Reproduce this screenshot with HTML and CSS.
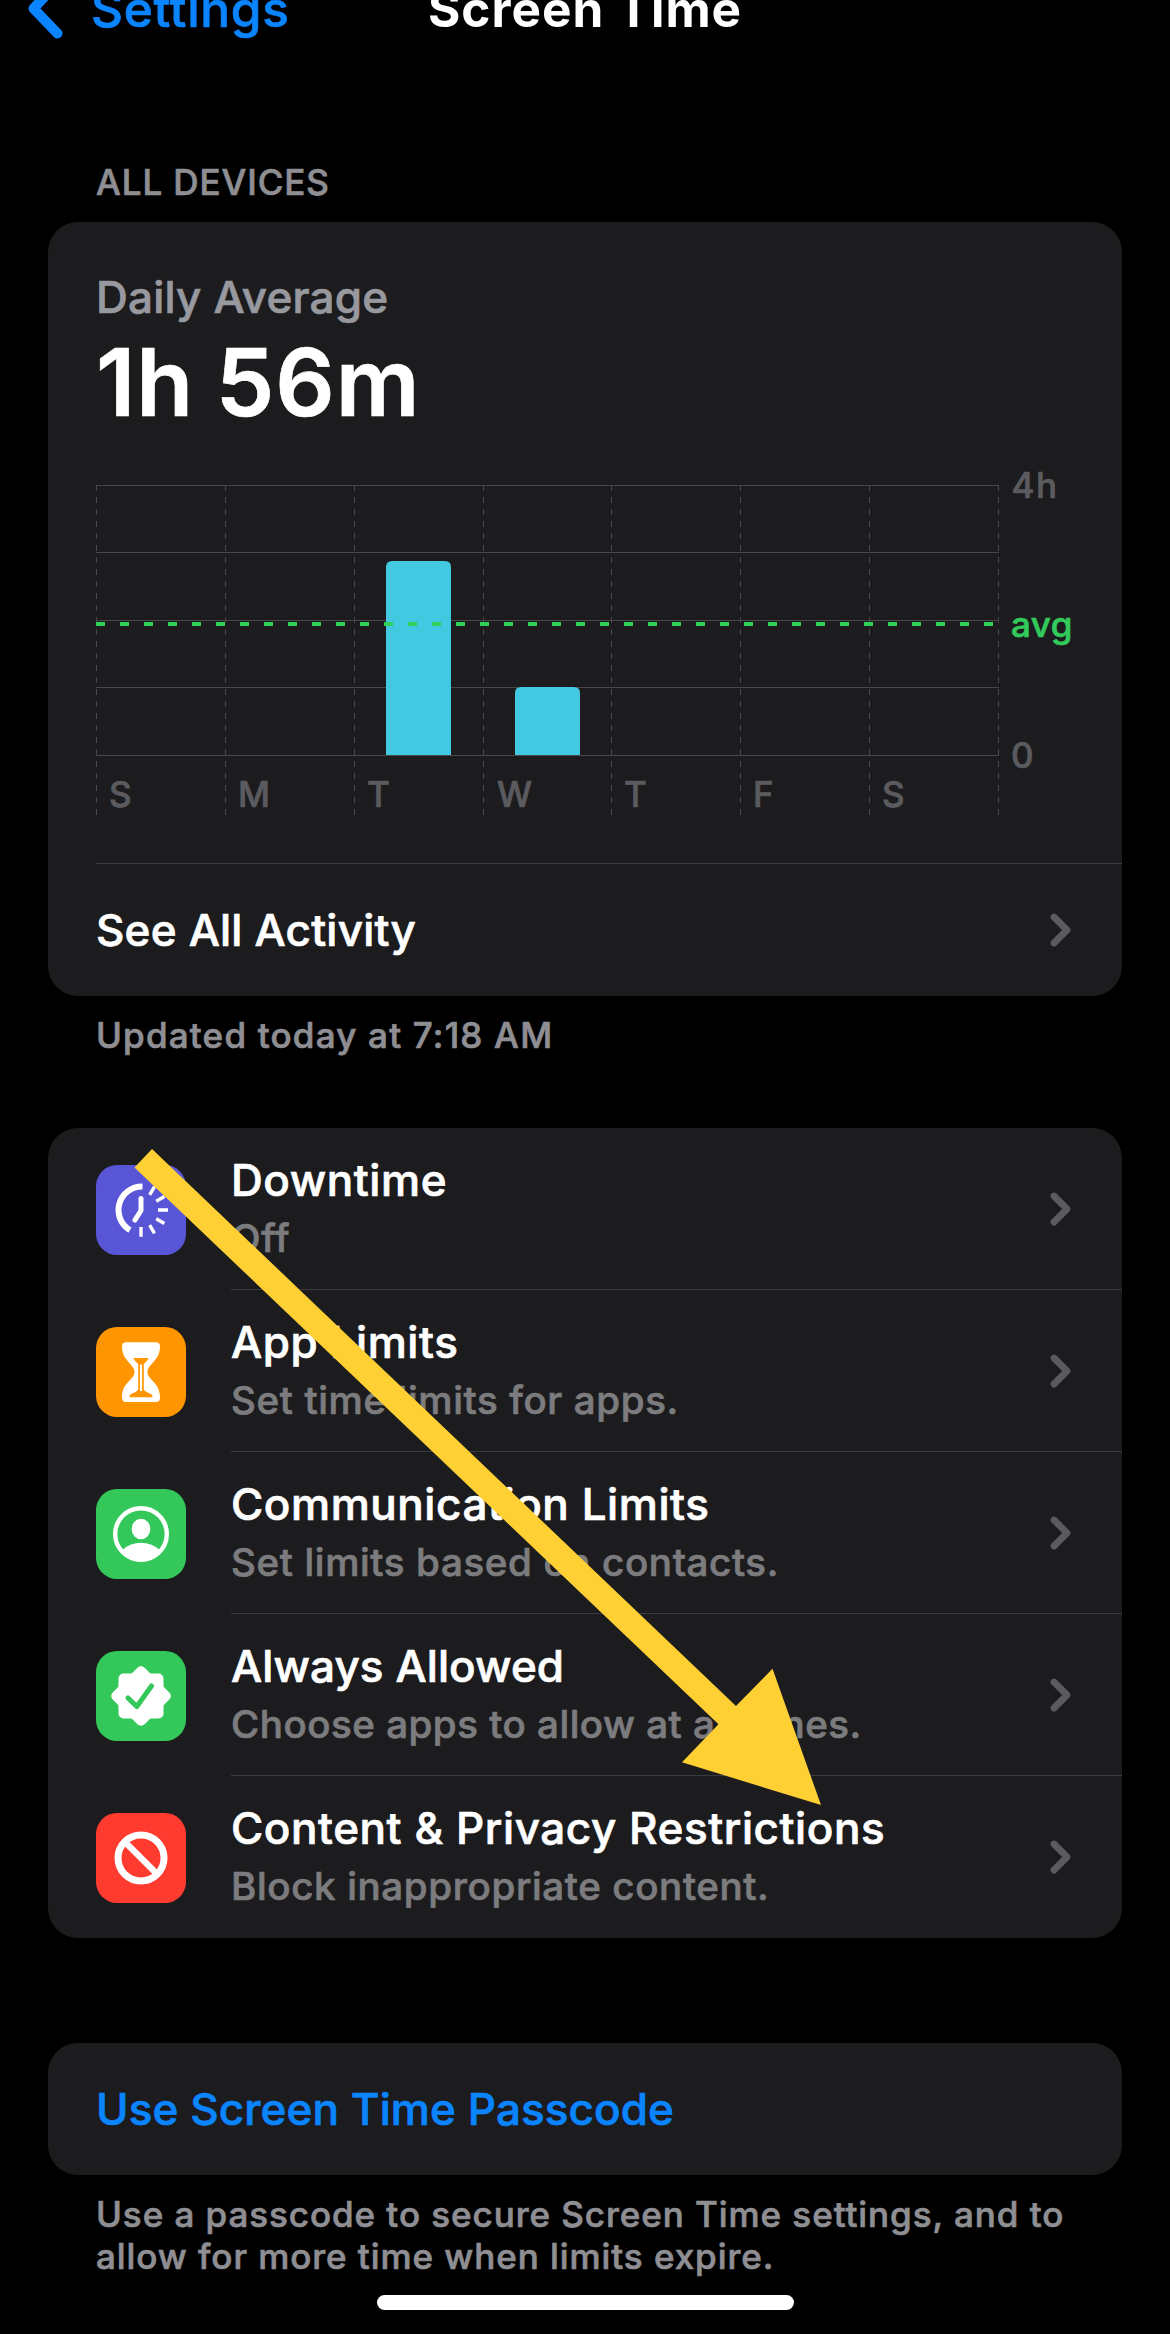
FILE: index.html
```html
<!DOCTYPE html>
<html lang="en">

<head>
    <meta charset="UTF-8">
    <meta name="viewport" content="width=device-width, initial-scale=1.0">
    <title>Screen Time</title>
    <link rel="stylesheet" href="styles.css">
</head>

<body>
    <header class="navbar">
        <a class="back" href="#">
            <svg class="back-icon" viewBox="0 0 40 60">
                <path d="M33.5 4 L9.5 29.5 L33.5 54.5" />
            </svg>
            Settings
        </a>
        <h1>Screen Time</h1>
    </header>

    <main>
        <h2 class="section-title">ALL DEVICES</h2>
        <section class="card usage">
            <div class="usage-label">Daily Average</div>
            <div class="usage-total">1h 56m</div>

            <svg class="chart" viewBox="0 0 1026 378">
                <!-- hour lines -->
                <g class="grid">
                    <path d="M0 .5H903M0 67.5H903M0 135.5H903M0 202.5H903M0 270.5H903" />
                    <path class="dashed" d="M.5 0V330M129.5 0V330M258.5 0V330M387.5 0V330M515.5 0V330M644.5 0V330M773.5 0V330M902.5 0V330" />
                </g>
                <!-- bars -->
                <g class="bars">
                    <path d="M290 270V82q0-6 6-6h53q6 0 6 6V270z" />
                    <path d="M419 270V208q0-6 6-6h53q6 0 6 6V270z" />
                </g>
                <path class="avg-line" d="M0 139H902" />
                <g class="labels">
                    <text x="13" y="322">S</text>
                    <text x="142" y="322">M</text>
                    <text x="271" y="322">T</text>
                    <text x="401" y="322">W</text>
                    <text x="528" y="322">T</text>
                    <text x="657" y="322">F</text>
                    <text x="786" y="322">S</text>
                    <text class="hours" x="915.5" y="12.5">4h</text>
                    <text class="avg" x="915" y="152">avg</text>
                    <text x="915" y="283">0</text>
                </g>
            </svg>

            <a class="row plain" href="#">
                <span class="title activity">See All Activity</span>
                <svg class="chevron" viewBox="0 0 22 34"><path d="M4 4L17 17L4 30" /></svg>
            </a>
        </section>
        <p class="note updated">Updated today at 7:18 AM</p>

        <section class="card options">
            <a class="row" href="#">
                <svg class="icon purple" viewBox="0 0 90 90">
                    <path class="line" stroke-width="6" d="M46.5 21.5A23.5 23.5 0 0 0 34 65.2" />
                    <path class="line round" stroke-width="5" d="M45 33.5V45.5L39 55" />
                    <path class="line" stroke-width="3.4" d="M62 45H72M60.2 53.7L68.4 58.5M53.7 60.2L58.5 68.4M45 62V71.8M60.2 36.3L68.4 31.5M53.7 29.8L58.5 21.6" />
                </svg>
                <div class="text">
                    <div>
                        <div class="title">Downtime</div>
                        <div class="subtitle">Off</div>
                    </div>
                    <svg class="chevron" viewBox="0 0 22 34"><path d="M4 4L17 17L4 30" /></svg>
                </div>
            </a>
            <a class="row" href="#">
                <svg class="icon orange" viewBox="0 0 90 90">
                    <path d="M30 15.3H60Q64 15.3 64 19.5C64 34 51.5 37 51.5 45C51.5 53 64 55 64 70.5Q64 75 60 75H30Q26 75 26 70.5C26 55 38.5 53 38.5 45C38.5 37 26 34 26 19.5Q26 15.3 30 15.3z" />
                    <path class="cutout" d="M37.3 31H52.7Q51 34.7 47.8 37V62.5Q49.5 65 55 67Q58 70 55.5 70.3H34.5Q32 70 35 67Q40.5 65 42.2 62.5V37Q39 34.7 37.3 31z" />
                    <path class="line" stroke-width="2.2" d="M45 37.5V64" />
                </svg>
                <div class="text">
                    <div>
                        <div class="title">App Limits</div>
                        <div class="subtitle">Set time limits for apps.</div>
                    </div>
                    <svg class="chevron" viewBox="0 0 22 34"><path d="M4 4L17 17L4 30" /></svg>
                </div>
            </a>
            <a class="row" href="#">
                <svg class="icon green" viewBox="0 0 90 90">
                    <circle class="line" stroke-width="4.4" cx="45" cy="45" r="25.8" />
                    <ellipse cx="45" cy="40" rx="9.3" ry="10.3" />
                    <path d="M27 60.5Q34.5 53.7 45 53.7T63 60.5Q56 71 45 71T27 60.5z" />
                </svg>
                <div class="text">
                    <div>
                        <div class="title">Communication Limits</div>
                        <div class="subtitle">Set limits based on contacts.</div>
                    </div>
                    <svg class="chevron" viewBox="0 0 22 34"><path d="M4 4L17 17L4 30" /></svg>
                </div>
            </a>
            <a class="row" href="#">
                <svg class="icon green" viewBox="0 0 90 90">
                    <rect x="22.5" y="22.5" width="45" height="45" rx="5" />
                    <rect x="22.5" y="22.5" width="45" height="45" rx="5" transform="rotate(45 45 45)" />
                    <path class="mark round" d="M32 47L40.8 55.5L55.5 35" />
                </svg>
                <div class="text">
                    <div>
                        <div class="title allowed">Always Allowed</div>
                        <div class="subtitle always">Choose apps to allow at all times.</div>
                    </div>
                    <svg class="chevron" viewBox="0 0 22 34"><path d="M4 4L17 17L4 30" /></svg>
                </div>
            </a>
            <a class="row" href="#">
                <svg class="icon red" viewBox="0 0 90 90">
                    <circle class="line" stroke-width="7" cx="45" cy="45" r="23" />
                    <path class="line" stroke-width="6.4" d="M29 29L61 61" />
                </svg>
                <div class="text">
                    <div>
                        <div class="title">Content &amp; Privacy Restrictions</div>
                        <div class="subtitle">Block inappropriate content.</div>
                    </div>
                    <svg class="chevron" viewBox="0 0 22 34"><path d="M4 4L17 17L4 30" /></svg>
                </div>
            </a>

            <!-- arrow pointing at the restrictions row -->
            <svg class="arrow" viewBox="0 0 690 660">
                <path d="M18 0L602 557L638.5 519.7L687 656L548 613.3L584.5 575.3L0.5 18.5z" />
            </svg>
        </section>

        <section class="card passcode">
            <a class="row plain" href="#"><span class="title link">Use Screen Time Passcode</span></a>
        </section>
        <p class="note">Use a passcode to secure Screen Time settings, and to<br>allow for more time when limits expire.</p>
    </main>

    <div class="home-bar"></div>
</body>

</html>
```
FILE: styles.css
```css
* {
    box-sizing: border-box;
}

body {
    font-family: Inter, sans-serif;
    font-weight: 500;
    -webkit-text-stroke: 0.7px;
    background-color: #000;
    color: #fff;
    margin: 0;
    height: 2334px;
    overflow: hidden;
}

a {
    color: inherit;
    text-decoration: none;
}

svg {
    display: block;
}

h1,
h2,
p {
    margin: 0;
}

/* top bar, scrolled partly out of view */
.navbar {
    display: grid;
    grid-template-columns: 1fr auto 1fr;
    align-items: center;
    height: 60px;
    margin-top: -21px;
    padding: 0 24px;
    font-size: 49.5px;
    letter-spacing: 0.7px;
}

.navbar h1 {
    font-size: 49.5px;
    font-weight: 700;
    letter-spacing: 1px;
    -webkit-text-stroke: 0;
}

.back {
    display: flex;
    align-items: center;
    gap: 27px;
    color: #0a84ff;
}

.back-icon {
    width: 40px;
    height: 60px;
    fill: none;
    stroke: #0a84ff;
    stroke-width: 10;
    stroke-linecap: round;
    stroke-linejoin: round;
}

main {
    padding: 0 48px;
}

.section-title {
    margin-top: 122px;
    padding-left: 48px;
    font-size: 35px;
    font-weight: 500;
    line-height: 42px;
    letter-spacing: 0.9px;
    color: #8e8e93;
}

.card {
    background-color: #1c1c1e;
    border-radius: 30px;
    overflow: hidden;
}

/* usage card */
.usage {
    margin-top: 19px;
    padding: 48px 0 0 48px;
}

.usage-label {
    font-size: 44px;
    line-height: 54px;
    letter-spacing: 0.2px;
    color: #98989f;
}

.usage-total {
    font-size: 93px;
    font-weight: 600;
    line-height: 116px;
    letter-spacing: 1px;
    word-spacing: -3px;
}

.chart {
    width: 1026px;
    height: 378px;
    margin-top: 45px;
    overflow: visible;
}

.grid path {
    fill: none;
    stroke: #48484b;
    stroke-width: 1;
}

.grid .dashed {
    stroke-dasharray: 6 6;
}

.bars {
    fill: #42c8e0;
}

.avg-line {
    stroke: #30d158;
    stroke-width: 4;
    stroke-dasharray: 9 15;
}

.labels {
    fill: #5b5b5f;
    stroke: #5b5b5f;
    stroke-width: 0.7;
    font-size: 35px;
}

.labels .hours {
    letter-spacing: 1.5px;
}

.labels .avg {
    fill: #32ca5b;
    stroke: #32ca5b;
    letter-spacing: 0.5px;
}

/* rows */
.row {
    display: flex;
    align-items: center;
    height: 162px;
}

.row.plain {
    height: 132px;
    justify-content: space-between;
    padding-right: 50px;
}

.usage .row {
    height: 133px;
    border-top: 1px solid #3b3b3e;
}

.text {
    display: flex;
    flex: 1;
    align-items: center;
    justify-content: space-between;
    height: 162px;
    padding-right: 50px;
    border-bottom: 1px solid #3b3b3e;
}

.row:nth-child(5) .text {
    border-bottom-color: transparent;
}

.text > div {
    padding-top: 2px;
}

.title {
    font-size: 44px;
    line-height: 56px;
    letter-spacing: 0.57px;
}

.title.activity {
    letter-spacing: 0.2px;
}

.title.allowed,
.title.link {
    letter-spacing: 0.1px;
}

.title.link {
    color: #0a84ff;
}

.subtitle {
    font-size: 38.5px;
    line-height: 60px;
    letter-spacing: 0.65px;
    color: #7c7c7f;
}

.subtitle.always {
    letter-spacing: 0.52px;
}

.chevron {
    width: 22px;
    height: 34px;
    fill: none;
    stroke: #5b5b5f;
    stroke-width: 6.8;
    stroke-linecap: round;
    stroke-linejoin: round;
}

.note {
    margin-top: 18px;
    padding-left: 48px;
    font-size: 35px;
    line-height: 42px;
    letter-spacing: 0.94px;
    color: #8e8e93;
}

.note.updated {
    letter-spacing: 1.2px;
}

/* options card */
.options {
    position: relative;
    margin-top: 72px;
    padding-left: 48px;
}

.icon {
    width: 90px;
    height: 90px;
    margin: 2px 45px 0 0;
    border-radius: 21px;
    fill: #fff;
}

.purple {
    background-color: #5856d6;
}

.orange {
    background-color: #ff9500;
}

.green {
    background-color: #34c759;
}

.red {
    background-color: #ff3b30;
}

.icon .line {
    fill: none;
    stroke: #fff;
}

.icon .round {
    stroke-linecap: round;
    stroke-linejoin: round;
}

.icon .cutout {
    fill: #ff9500;
}

.icon .mark {
    fill: none;
    stroke: #34c759;
    stroke-width: 5;
}

.arrow {
    position: absolute;
    top: 21px;
    left: 85.5px;
    width: 690px;
    height: 660px;
    fill: #ffd033;
}

.passcode {
    margin-top: 105px;
    padding-left: 48px;
}

.home-bar {
    width: 417px;
    height: 15px;
    margin: 18px auto 0;
    border-radius: 8px;
    background-color: #fff;
}
```
